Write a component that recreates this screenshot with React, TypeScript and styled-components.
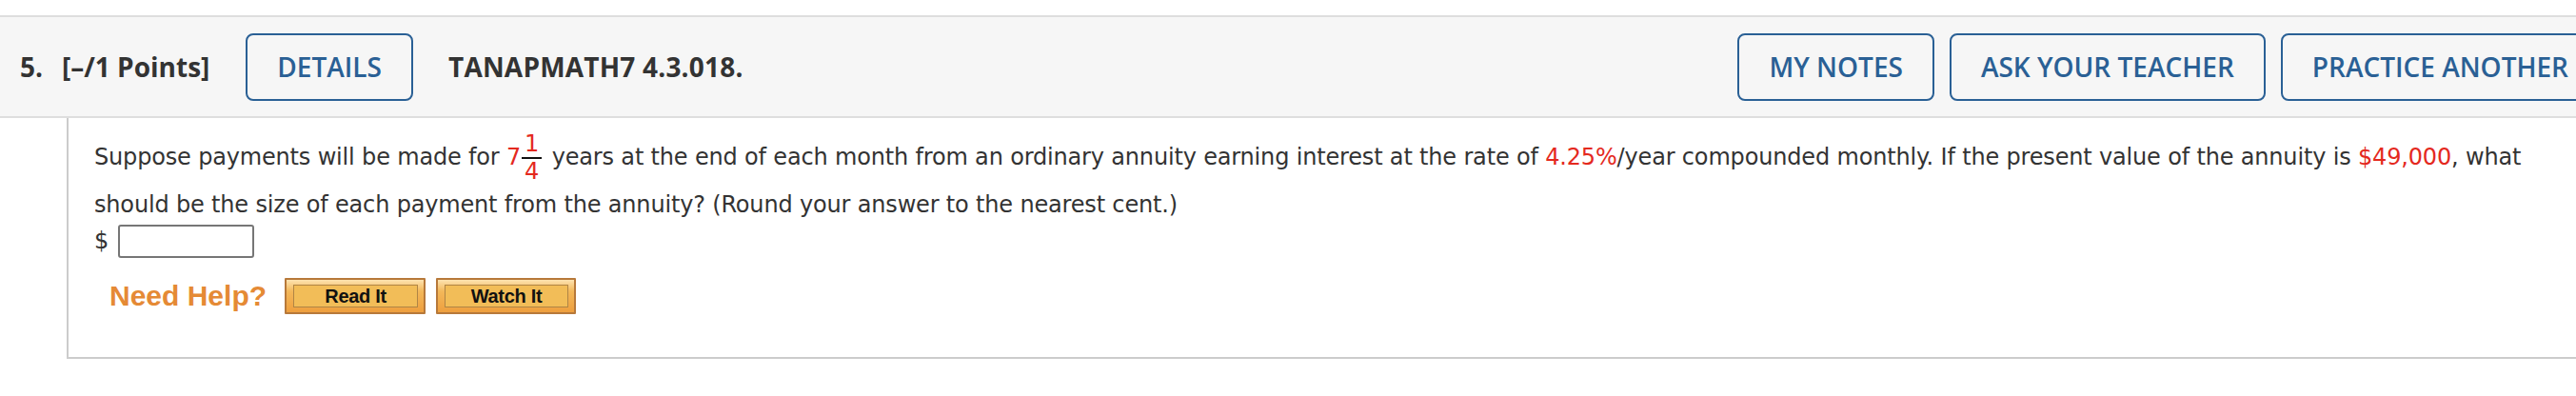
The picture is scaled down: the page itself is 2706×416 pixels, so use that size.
import React from "react";
import styled, { createGlobalStyle } from "styled-components";

const Global = createGlobalStyle`
  html, body {
    margin: 0;
    padding: 0;
    background: #ffffff;
    overflow: hidden;
  }
`;

const Page = styled.div`
  width: 2752px;
  padding-top: 16px;
`;

const Header = styled.header`
  display: flex;
  align-items: center;
  height: 104px;
  padding: 0 21px;
  background: #f6f6f6;
  border-top: 2px solid #dedede;
  border-bottom: 2px solid #dedede;
  font-family: "Open Sans", "Liberation Sans", sans-serif;
`;

const LeftGroup = styled.div`
  display: flex;
  align-items: center;
`;

const RightGroup = styled.div`
  display: flex;
  align-items: center;
  gap: 16px;
  margin-left: auto;
`;

const Number = styled.span`
  font-size: 28px;
  font-weight: 700;
  color: #333333;
  margin-right: 20px;
`;

const Points = styled.span`
  font-size: 28px;
  font-weight: 700;
  color: #333333;
  margin-right: 38px;
`;

const Title = styled.span`
  font-size: 28px;
  font-weight: 700;
  color: #333333;
  margin-left: 37px;
  letter-spacing: 0.2px;
`;

const OutlineButton = styled.button`
  box-sizing: border-box;
  height: 71px;
  padding: 0 31px;
  background: transparent;
  border: 2px solid #2a6095;
  border-radius: 8px;
  color: #2a6095;
  font-family: "Open Sans", "Liberation Sans", sans-serif;
  font-size: 28px;
  font-weight: 600;
  white-space: nowrap;
  flex-shrink: 0;
`;

const Body = styled.section`
  margin-left: 70px;
  padding: 14px 52px 45px 27px;
  border-left: 2px solid #cccccc;
  border-bottom: 2px solid #cccccc;
  font-family: Verdana, "DejaVu Sans", sans-serif;
  font-size: 24px;
  letter-spacing: -0.17px;
  color: #333333;
`;

const Question = styled.p`
  margin: 0;
  line-height: 42px;
`;

const Red = styled.span`
  color: #e4291e;
`;

const Fraction = styled.span`
  display: inline-flex;
  flex-direction: column;
  align-items: center;
  vertical-align: middle;
  margin: 0 3px 0 1px;
  line-height: 27px;
  color: #e4291e;
`;

const Numerator = styled.span`
  display: block;
  padding: 0 3px;
  border-bottom: 2px solid #111111;
`;

const Denominator = styled.span`
  display: block;
`;

const AnswerRow = styled.div`
  display: flex;
  align-items: center;
  gap: 10px;
  height: 34px;
`;

const AnswerInput = styled.input`
  box-sizing: border-box;
  width: 143px;
  height: 35px;
  border: 2px solid #767676;
  border-radius: 3px;
  background: #ffffff;
  margin: 0;
`;

const HelpRow = styled.div`
  display: flex;
  align-items: center;
  margin-top: 22px;
  padding-left: 16px;
  gap: 11px;
`;

const NeedHelp = styled.span`
  font-family: "Liberation Sans", Arial, sans-serif;
  font-weight: 700;
  font-size: 30px;
  letter-spacing: 0;
  color: #e58a35;
  margin-right: 8px;
`;

const HelpButton = styled.button`
  box-sizing: border-box;
  display: flex;
  align-items: stretch;
  height: 38px;
  padding: 5px 6px 5px 7px;
  border: 2px solid #b7793a;
  border-radius: 1px;
  background: linear-gradient(#fde3b0 0%, #f3b85a 35%, #ee9f3e 100%);
  cursor: pointer;
`;

const HelpFace = styled.span<{ $w: number }>`
  display: flex;
  align-items: center;
  justify-content: center;
  width: ${(p) => p.$w}px;
  border: 1px solid #b08545;
  background: #f2bd58;
  font-family: "Liberation Sans", Arial, sans-serif;
  font-weight: 700;
  font-size: 20px;
  letter-spacing: -0.3px;
  color: #111111;
`;

export default function App() {
  return (
    <>
      <Global />
      <Page>
        <Header>
          <LeftGroup>
            <Number>5.</Number>
            <Points>[–/1 Points]</Points>
            <OutlineButton>DETAILS</OutlineButton>
            <Title>TANAPMATH7 4.3.018.</Title>
          </LeftGroup>
          <RightGroup>
            <OutlineButton>MY NOTES</OutlineButton>
            <OutlineButton>ASK YOUR TEACHER</OutlineButton>
            <OutlineButton>PRACTICE ANOTHER</OutlineButton>
          </RightGroup>
        </Header>
        <Body>
          <Question>
            Suppose payments will be made for <Red>7</Red>
            <Fraction>
              <Numerator>1</Numerator>
              <Denominator>4</Denominator>
            </Fraction>{" "}
            years at the end of each month from an ordinary annuity earning
            interest at the rate of <Red>4.25%</Red>/year compounded monthly. If
            the present value of the annuity is <Red>$49,000</Red>, what should
            be the size of each payment from the annuity? (Round your answer to
            the nearest cent.)
          </Question>
          <AnswerRow>
            <span>$</span>
            <AnswerInput type="text" aria-label="answer" />
          </AnswerRow>
          <HelpRow>
            <NeedHelp>Need Help?</NeedHelp>
            <HelpButton>
              <HelpFace $w={129}>Read It</HelpFace>
            </HelpButton>
            <HelpButton>
              <HelpFace $w={128}>Watch It</HelpFace>
            </HelpButton>
          </HelpRow>
        </Body>
      </Page>
    </>
  );
}
